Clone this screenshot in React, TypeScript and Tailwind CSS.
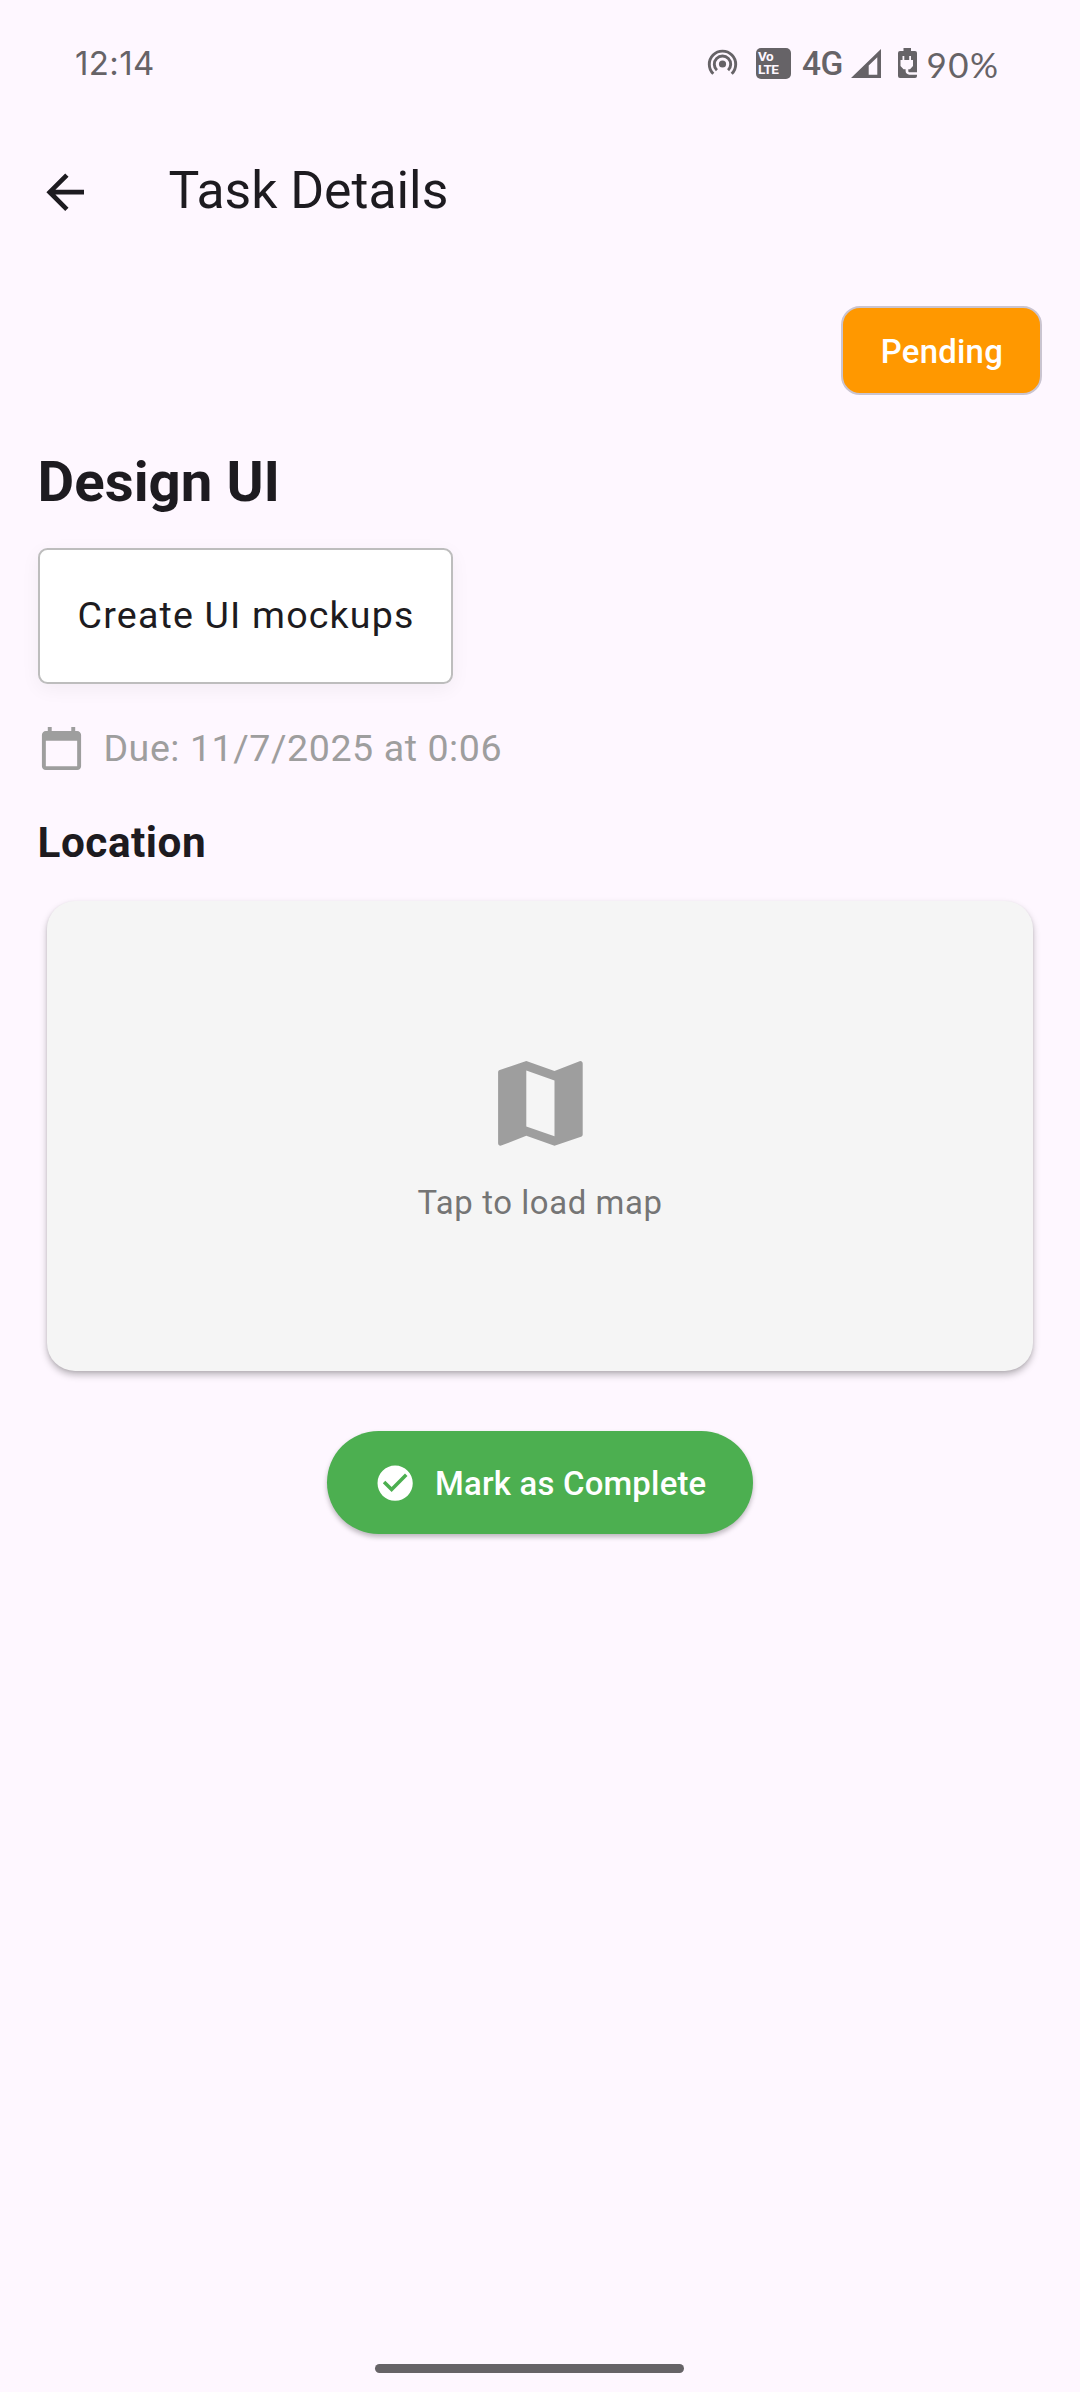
import React from "react";

function StatusBar() {
  return (
    <div className="flex h-[125px] shrink-0 items-start justify-between pl-[75px] pr-[80px] text-[#666367]">
      <span className="mt-[41px] h-11 font-['Inter'] text-[33px] leading-[44px] tracking-[0.4px]">12:14</span>
      <div className="mt-[41px] flex h-11 items-center">
        <svg className="mr-[17px] h-8 w-8" viewBox="0 0 32 32" fill="none" stroke="currentColor" strokeWidth="2.9" strokeLinecap="butt">
          <circle cx="15.5" cy="17" r="3.6" fill="currentColor" stroke="none" />
          <path d="M9.900 23.2a8.2 8.2 0 1 1 11.2 0" />
          <path d="M6.300 26.8a13.2 13.2 0 1 1 18.4 0" />
        </svg>
        <div className="flex h-[31px] w-[35px] flex-col justify-center rounded-[5px] bg-[#666367] pl-[2px] font-['Roboto'] text-[13.5px] font-bold leading-[13.5px] tracking-[-0.4px] text-[#fef7ff]">
          <span>Vo</span>
          <span>LTE</span>
        </div>
        <span className="ml-[11px] mt-px w-[43px] font-['Roboto'] text-[33.5px] font-medium leading-[44px] tracking-[-0.5px]">4G</span>
        <svg className="ml-[6px] h-[29px] w-[30px]" viewBox="0 0 30 29">
          <path d="M0 29 30 0v29H0Zm17.700-3.300h8.600V8.200L17.700 16.500Z" fill="currentColor" fillRule="evenodd" />
        </svg>
        <svg className="ml-[17px] h-[30px] w-[19px]" viewBox="0 0 19 30">
          <path d="M5.500 0h7.500v3h4a2 2 0 0 1 2 2v23a2 2 0 0 1-2 2H2a2 2 0 0 1-2-2V5a2 2 0 0 1 2-2h3.500Z" fill="currentColor" />
          <path d="M4.500 8h1.800v4h4.900V8H13v4h2v6l-3 3.200h-1.700V23c0 .8.500 1.300 1.300 1.300H19v2.400h-7.600c-2.200 0-3.800-1.500-3.800-3.600v-1.900H5.500L2.500 18v-6h2Z" fill="#fef7ff" />
        </svg>
        <span className="ml-[9.5px] mt-[2px] w-[73.5px] whitespace-nowrap font-['Lato'] text-[35px] leading-[44px] tracking-[1.4px]">90%</span>
      </div>
    </div>
  );
}

function AppBar() {
  return (
    <header className="flex h-[132px] shrink-0 items-center pl-[37px]">
      <button aria-label="Back" className="pt-[2px]">
        <svg className="size-[56.4px]" viewBox="0 0 24 24" fill="currentColor">
          <path d="M20 11H7.830l5.590-5.590L12 4l-8 8 8 8 1.410-1.410L7.830 13H20v-2z" />
        </svg>
      </button>
      <h1 className="ml-[75px] text-[51.7px] leading-[66px]">Task Details</h1>
    </header>
  );
}

function MapCard() {
  return (
    <button className="mt-[29.5px] flex h-[470px] w-[986px] flex-col items-center justify-center self-center rounded-[28px] bg-[#f5f5f5] pt-[2px] shadow-[0_4px_7px_rgba(0,0,0,0.26),0_1px_3px_rgba(0,0,0,0.08)]">
      <svg className="size-[112.8px] text-[#9e9e9e]" viewBox="0 0 24 24" fill="currentColor">
        <path d="m20.500 3-.160.030L15 5.100 9 3 3.360 4.900c-.210.070-.360.250-.360.480V20.500c0 .280.220.500.500.500l.160-.030L9 18.900l6 2.100 5.640-1.900c.210-.070.360-.250.360-.480V3.500c0-.280-.220-.500-.500-.500zM15 19l-6-2.110V5l6 2.110V19z" />
      </svg>
      <span className="mt-[19px] text-[32.9px] leading-[47px] tracking-[0.59px] text-[#757575]">Tap to load map</span>
    </button>
  );
}

export default function App() {
  return (
    <div className="flex h-[2392px] w-[1080px] flex-col bg-[#fef7ff] font-['Roboto',sans-serif] text-[#1d1b20]">
      <StatusBar />
      <AppBar />
      <main className="flex flex-1 flex-col items-start px-[37.6px]">
        <div className="mt-[49px] flex h-[89px] w-[201px] items-center justify-center self-end rounded-[19px] border-[2.35px] border-[#cac4d0] bg-[#ff9800] pt-[2px] text-[32.9px] font-medium tracking-[0.24px] text-white">
          Pending
        </div>
        <h2 className="mt-[50px] text-[56.4px] font-bold leading-[75px]">Design UI</h2>
        <div className="mt-[28px] flex h-[136px] w-[415.5px] items-center whitespace-nowrap rounded-[9.4px] border-[2.35px] border-[#bdbdbd] bg-white pb-px pl-[38px] text-[37.6px] tracking-[1.175px] shadow-[0_5px_19px_rgba(0,0,0,0.05)]">
          Create UI mockups
        </div>
        <div className="mt-[36.5px] flex h-[56px] items-center text-[37.6px] tracking-[0.56px] text-[#9e9e9e]">
          <svg className="mr-[18.8px] size-[47px]" viewBox="0 0 24 24" fill="currentColor">
            <path d="M20 3h-1V1h-2v2H7V1H5v2H4c-1.100 0-2 .9-2 2v16c0 1.100.9 2 2 2h16c1.100 0 2-.9 2-2V5c0-1.100-.9-2-2-2zm0 18H4V8h16v13z" />
          </svg>
          Due: 11/7/2025 at 0:06
        </div>
        <h3 className="mt-[38.5px] text-[42.3px] font-bold leading-[56px] tracking-[0.5px]">Location</h3>
        <MapCard />
        <button className="mt-[60.5px] flex h-[103.4px] w-[426px] items-center self-center rounded-full bg-[#4caf50] pl-[47px] pt-px text-[32.9px] font-medium tracking-[0.2px] text-white shadow-[0_3px_5px_rgba(0,0,0,0.26)]">
          <svg className="mr-[18.8px] size-[42.3px]" viewBox="0 0 24 24" fill="currentColor">
            <path d="M12 2C6.480 2 2 6.480 2 12s4.480 10 10 10 10-4.480 10-10S17.520 2 12 2zm-2 15-5-5 1.410-1.410L10 14.170l7.590-7.590L19 8l-9 9z" />
          </svg>
          Mark as Complete
        </button>
      </main>
      <div className="mb-[19px] ml-[375px] h-[9.4px] w-[309px] shrink-0 rounded-full bg-[#666367]" />
    </div>
  );
}
